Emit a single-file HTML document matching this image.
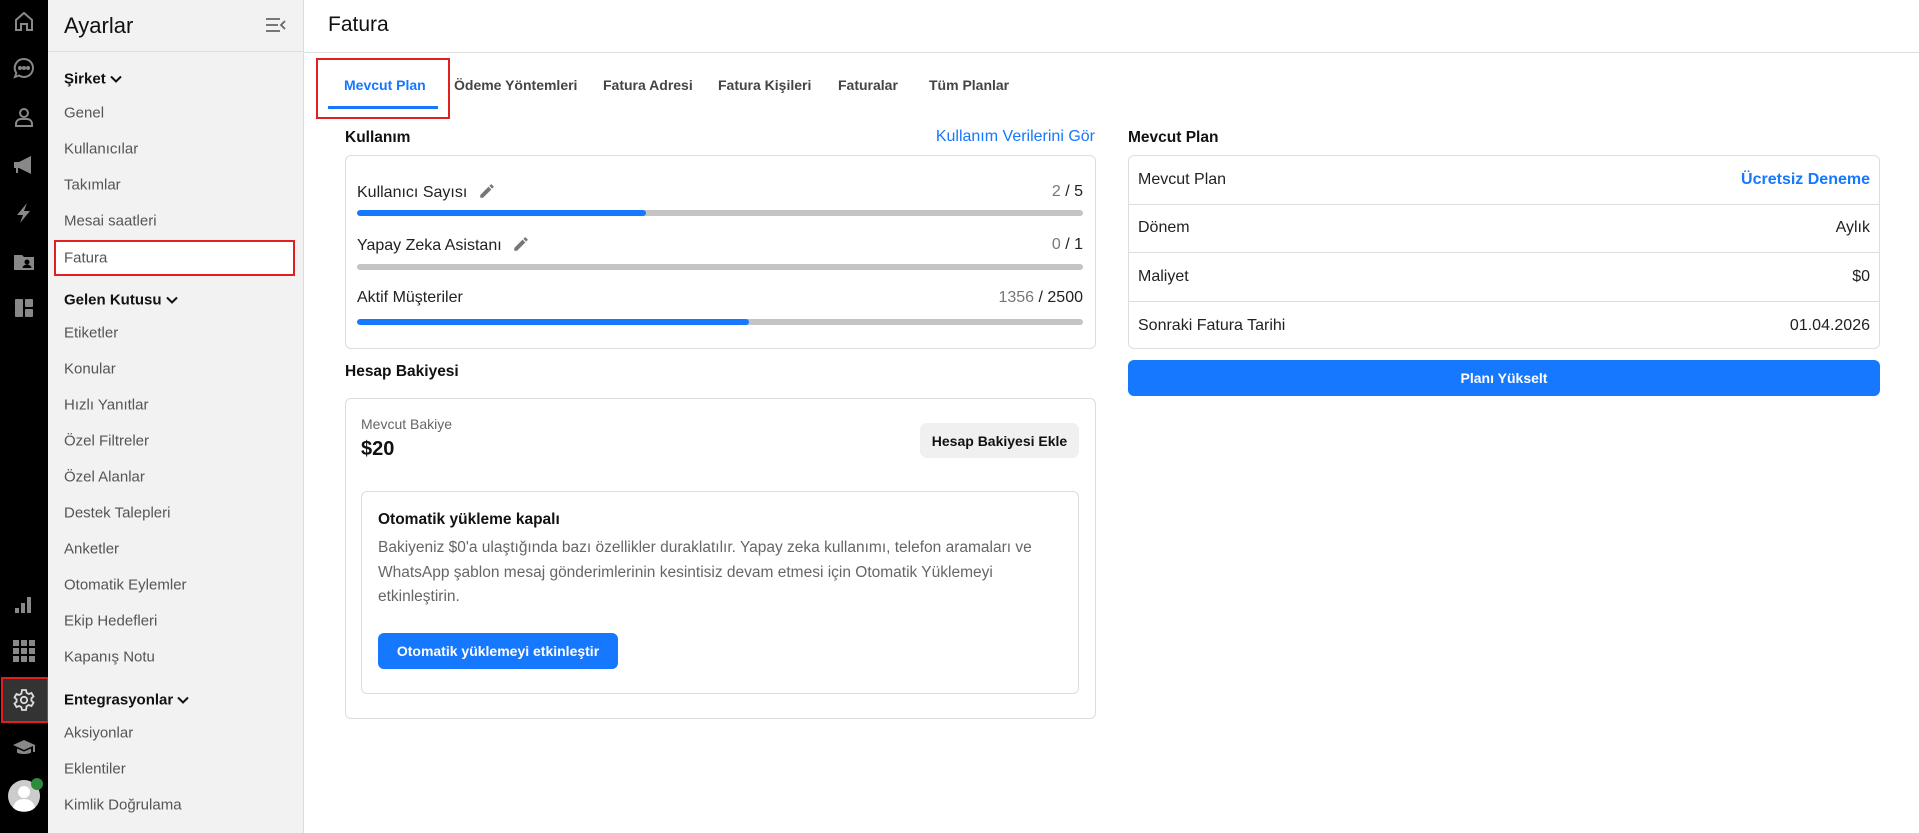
<!DOCTYPE html>
<html><head><meta charset="utf-8"><style>
*{box-sizing:border-box;margin:0;padding:0}
body{width:1919px;height:833px;overflow:hidden;background:#fff;font-family:"Liberation Sans",Arial,sans-serif;position:relative;color:#111}
.a{position:absolute}
.rail{left:0;top:0;width:48px;height:833px;background:#000}
.ic{position:absolute;left:12px;width:24px;height:24px}
.side{left:48px;top:0;width:256px;height:833px;background:#f2f2f2;border-right:1px solid #ddd}
.it{position:absolute;left:16px;font-size:15px;color:#555;transform:translateY(-50%)}
.sec{position:absolute;left:16px;font-size:15px;font-weight:bold;color:#111;transform:translateY(-50%)}
.sec svg{vertical-align:middle;margin-left:4px}
.tab{position:absolute;top:85px;transform:translateY(-50%);font-size:14px;font-weight:bold;color:#444}
.card{position:absolute;border:1px solid #ddd;border-radius:6px;background:#fff}
.lbl{position:absolute;font-size:16px;color:#222;transform:translateY(-50%)}
.bar{position:absolute;left:357px;width:726px;height:6px;border-radius:3px;background:#c4c4c4;overflow:hidden}
.bar i{display:block;height:100%;background:#1677ff;border-radius:3px}
.row{height:48.5px;border-bottom:1px solid #ddd;display:flex;justify-content:space-between;align-items:center;padding:0 9px;font-size:16px;color:#222}
.row:last-child{border-bottom:none}
.h{position:absolute;font-size:15.5px;font-weight:bold;transform:translateY(-50%)}
</style></head><body>
<div class="a rail">
 <svg class="ic" style="top:10px" viewBox="0 0 24 24" fill="none" stroke="#888" stroke-width="2"><path d="M4 20V10l8-7 8 7v10h-5v-6H9v6z"/></svg>
 <svg class="ic" style="top:56px" viewBox="0 0 24 24" fill="none" stroke="#888" stroke-width="2"><path d="M12 3a9 9 0 1 1-5 16.5L3 21l1.3-4A9 9 0 0 1 12 3z"/><circle cx="8" cy="12" r="1" fill="#888"/><circle cx="12" cy="12" r="1" fill="#888"/><circle cx="16" cy="12" r="1" fill="#888"/></svg>
 <svg class="ic" style="top:105px" viewBox="0 0 24 24" fill="none" stroke="#888" stroke-width="2"><circle cx="12" cy="8" r="4"/><path d="M4 21v-2a5 5 0 0 1 5-5h6a5 5 0 0 1 5 5v2z"/></svg>
 <svg class="ic" style="top:153px" viewBox="0 0 24 24" fill="#888"><path d="M2 9h5l12-6v18L7 15H6v5H4v-5H2z"/></svg>
 <svg class="ic" style="top:201px" viewBox="0 0 24 24" fill="#888"><path d="M15 2L5 14h6l-3 8 10-12h-6z"/></svg>
 <svg class="ic" style="top:250px" viewBox="0 0 24 24" fill="#888"><path d="M2 5h8l2 2h10v13H2z"/><circle cx="15" cy="12" r="2.5" fill="#000"/><path d="M10.5 18a4.5 3.5 0 0 1 9 0z" fill="#000"/></svg>
 <svg class="ic" style="top:296px" viewBox="0 0 24 24" fill="#888"><rect x="3" y="3" width="8" height="18" rx="1"/><rect x="13" y="3" width="8" height="8" rx="1"/><rect x="13" y="13" width="8" height="8" rx="1"/></svg>
 <svg class="ic" style="top:593px" viewBox="0 0 24 24" fill="#888"><rect x="3" y="15" width="4" height="5"/><rect x="9" y="10" width="4" height="10"/><rect x="15" y="4" width="4" height="16"/></svg>
 <svg class="ic" style="top:639px" viewBox="0 0 24 24" fill="#888"><rect x="1" y="1" width="6" height="6"/><rect x="9" y="1" width="6" height="6"/><rect x="17" y="1" width="6" height="6"/><rect x="1" y="9" width="6" height="6"/><rect x="9" y="9" width="6" height="6"/><rect x="17" y="9" width="6" height="6"/><rect x="1" y="17" width="6" height="6"/><rect x="9" y="17" width="6" height="6"/><rect x="17" y="17" width="6" height="6"/></svg>
 <div class="a" style="left:1px;top:677px;width:48px;height:46px;background:#333;border:2px solid #e02020"></div>
 <svg class="ic" style="top:688px" viewBox="0 0 24 24" fill="none" stroke="#ddd" stroke-width="1.8"><circle cx="12" cy="12" r="3.2"/><path d="M10 2h4l.6 2.8 2.2 1.2 2.7-1 2 3.4-2.1 1.9v2.4l2.1 1.9-2 3.4-2.7-1-2.2 1.2L14 22h-4l-.6-2.8-2.2-1.2-2.7 1-2-3.4 2.1-1.9V11.3L2.5 9.4l2-3.4 2.7 1 2.2-1.2z"/></svg>
 <svg class="ic" style="top:736px" viewBox="0 0 24 24" fill="#888"><path d="M12 4L1 9l11 5 9-4v6h2V9z"/><path d="M5 12.5v4c2 2 12 2 14 0v-4l-7 3z"/></svg>
 <div class="a" style="left:8px;top:780px;width:32px;height:32px;border-radius:50%;background:#ccc;overflow:hidden"><div class="a" style="left:10px;top:6px;width:12px;height:12px;border-radius:50%;background:#fff"></div><div class="a" style="left:5px;top:19px;width:22px;height:12px;border-radius:11px 11px 2px 2px;background:#fff"></div></div>
 <div class="a" style="left:31px;top:778px;width:12px;height:12px;border-radius:50%;background:#2e8b3a"></div>
</div>
<div class="a side">
 <div class="a" style="left:16px;top:13px;font-size:22px;color:#111">Ayarlar</div>
 <svg class="a" style="left:217px;top:17px" width="22" height="16" viewBox="0 0 22 16" fill="none" stroke="#666" stroke-width="1.8"><path d="M1 2h14M1 8h12M1 14h14M20 4l-4 4 4 4"/></svg>
 <div class="a" style="left:0;top:51px;width:256px;height:1px;background:#ddd"></div>
 <div class="sec" style="top:79px">Şirket<svg width="12" height="8" viewBox="0 0 12 8" fill="none" stroke="#111" stroke-width="2"><path d="M1 1l5 5 5-5"/></svg></div>
 <div class="it" style="top:113px">Genel</div>
 <div class="it" style="top:149px">Kullanıcılar</div>
 <div class="it" style="top:185px">Takımlar</div>
 <div class="it" style="top:221px">Mesai saatleri</div>
 <div class="a" style="left:6px;top:240px;width:241px;height:36px;background:#fff;border:2px solid #e02020"></div>
 <div class="it" style="top:258px">Fatura</div>
 <div class="sec" style="top:300px">Gelen Kutusu<svg width="12" height="8" viewBox="0 0 12 8" fill="none" stroke="#111" stroke-width="2"><path d="M1 1l5 5 5-5"/></svg></div>
 <div class="it" style="top:333px">Etiketler</div>
 <div class="it" style="top:369px">Konular</div>
 <div class="it" style="top:405px">Hızlı Yanıtlar</div>
 <div class="it" style="top:441px">Özel Filtreler</div>
 <div class="it" style="top:477px">Özel Alanlar</div>
 <div class="it" style="top:513px">Destek Talepleri</div>
 <div class="it" style="top:549px">Anketler</div>
 <div class="it" style="top:585px">Otomatik Eylemler</div>
 <div class="it" style="top:621px">Ekip Hedefleri</div>
 <div class="it" style="top:657px">Kapanış Notu</div>
 <div class="sec" style="top:700px">Entegrasyonlar<svg width="12" height="8" viewBox="0 0 12 8" fill="none" stroke="#111" stroke-width="2"><path d="M1 1l5 5 5-5"/></svg></div>
 <div class="it" style="top:733px">Aksiyonlar</div>
 <div class="it" style="top:769px">Eklentiler</div>
 <div class="it" style="top:805px">Kimlik Doğrulama</div>
</div>
<div class="a" style="left:328px;top:13px;font-size:21px;color:#111">Fatura</div>
<div class="a" style="left:304px;top:52px;width:1615px;height:1px;background:#ddd"></div>
<div class="a" style="left:316px;top:58px;width:134px;height:61px;border:2px solid #e02020"></div>
<div class="tab" style="left:344px;color:#1677ff">Mevcut Plan</div>
<div class="a" style="left:328px;top:106px;width:110px;height:3px;background:#1677ff"></div>
<div class="tab" style="left:454px">Ödeme Yöntemleri</div>
<div class="tab" style="left:603px">Fatura Adresi</div>
<div class="tab" style="left:718px">Fatura Kişileri</div>
<div class="tab" style="left:838px">Faturalar</div>
<div class="tab" style="left:929px">Tüm Planlar</div>

<div class="h" style="left:345px;top:138px">Kullanım</div>
<div class="a" style="right:824px;top:128px;font-size:16px;color:#1677ff">Kullanım Verilerini Gör</div>
<div class="card" style="left:345px;top:155px;width:751px;height:194px"></div>
<div class="lbl" style="left:357px;top:192px">Kullanıcı Sayısı <svg width="18" height="18" viewBox="0 0 24 24" fill="#777" style="vertical-align:-3px;margin-left:6px"><path d="M3 17.25V21h3.75L17.8 9.94l-3.75-3.75zM20.7 7.04a1 1 0 0 0 0-1.41l-2.34-2.34a1 1 0 0 0-1.41 0l-1.83 1.83 3.75 3.75z"/></svg></div>
<div class="lbl" style="right:836px;top:192px"><span style="color:#777">2</span> / 5</div>
<div class="bar" style="top:210px"><i style="width:289px"></i></div>
<div class="lbl" style="left:357px;top:245px">Yapay Zeka Asistanı <svg width="18" height="18" viewBox="0 0 24 24" fill="#777" style="vertical-align:-3px;margin-left:6px"><path d="M3 17.25V21h3.75L17.8 9.94l-3.75-3.75zM20.7 7.04a1 1 0 0 0 0-1.41l-2.34-2.34a1 1 0 0 0-1.41 0l-1.83 1.83 3.75 3.75z"/></svg></div>
<div class="lbl" style="right:836px;top:245px"><span style="color:#777">0</span> / 1</div>
<div class="bar" style="top:264px"></div>
<div class="lbl" style="left:357px;top:298px">Aktif Müşteriler</div>
<div class="lbl" style="right:836px;top:298px"><span style="color:#777">1356</span> / 2500</div>
<div class="bar" style="top:319px"><i style="width:392px"></i></div>

<div class="h" style="left:345px;top:372px">Hesap Bakiyesi</div>
<div class="card" style="left:345px;top:398px;width:751px;height:321px"></div>
<div class="a" style="left:361px;top:416px;font-size:14px;color:#666">Mevcut Bakiye</div>
<div class="a" style="left:361px;top:438px;font-size:20px;font-weight:bold">$20</div>
<div class="a" style="left:920px;top:423px;width:159px;height:35px;background:#f0f0f0;border-radius:7px;font-size:14px;font-weight:bold;display:flex;align-items:center;justify-content:center">Hesap Bakiyesi Ekle</div>
<div class="card" style="left:361px;top:491px;width:718px;height:203px"></div>
<div class="a" style="left:378px;top:511px;font-size:15.5px;font-weight:bold">Otomatik yükleme kapalı</div>
<div class="a" style="left:378px;top:536px;width:690px;font-size:15.5px;line-height:24.5px;color:#666">Bakiyeniz $0'a ulaştığında bazı özellikler duraklatılır. Yapay zeka kullanımı, telefon aramaları ve WhatsApp şablon mesaj gönderimlerinin kesintisiz devam etmesi için Otomatik Yüklemeyi etkinleştirin.</div>
<div class="a" style="left:378px;top:633px;width:240px;height:36px;background:#1677ff;border-radius:6px;color:#fff;font-size:14px;font-weight:bold;display:flex;align-items:center;justify-content:center">Otomatik yüklemeyi etkinleştir</div>

<div class="h" style="left:1128px;top:138px">Mevcut Plan</div>
<div class="card" style="left:1128px;top:155px;width:752px;height:194px;overflow:hidden">
 <div class="row"><span>Mevcut Plan</span><span style="color:#1677ff;font-weight:bold">Ücretsiz Deneme</span></div>
 <div class="row"><span>Dönem</span><span>Aylık</span></div>
 <div class="row"><span>Maliyet</span><span>$0</span></div>
 <div class="row"><span>Sonraki Fatura Tarihi</span><span>01.04.2026</span></div>
</div>
<div class="a" style="left:1128px;top:360px;width:752px;height:36px;background:#1677ff;border-radius:6px;color:#fff;font-size:14px;font-weight:bold;display:flex;align-items:center;justify-content:center">Planı Yükselt</div>
</body></html>
